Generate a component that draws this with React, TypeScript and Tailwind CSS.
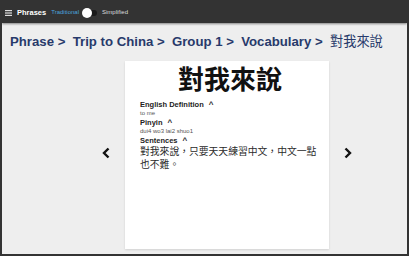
import React from "react";

function Label({ children }: { children: React.ReactNode }) {
  return (
    <div className="flex items-center gap-[5px] text-[7.5px] font-bold leading-[9px] text-[#222]">
      {children}
      <span className="text-[8px] font-bold">^</span>
    </div>
  );
}

export default function App() {
  return (
    <div
      className="box-border flex h-[256px] w-[409px] flex-col overflow-hidden border-2 border-[#333] bg-[#eeeeee]"
      style={{ fontFamily: '"Liberation Sans", Arial, "Noto Sans CJK TC", sans-serif' }}
    >
      <header className="flex h-[21px] shrink-0 items-center bg-[#333333] pl-[3px] shadow-[0_1px_2px_rgba(0,0,0,0.45)]">
        <svg width="7" height="6" viewBox="0 0 7 6" className="mr-[5px]">
          <rect x="0" y="0" width="7" height="1.2" fill="#ddd" />
          <rect x="0" y="2.4" width="7" height="1.2" fill="#ddd" />
          <rect x="0" y="4.8" width="7" height="1.2" fill="#ddd" />
        </svg>
        <span className="text-[7.5px] font-bold text-white">Phrases</span>
        <span className="ml-[5px] text-[6px] text-[#4aa3df]">Traditional</span>
        <div className="relative ml-[4px] h-[6px] w-[14px] rounded-full bg-[#1a1a1a]">
          <div className="absolute left-[-1px] top-[-2px] h-[10px] w-[10px] rounded-full bg-white" />
        </div>
        <span className="ml-[5px] text-[6px] text-[#ddd]">Simplified</span>
      </header>

      <div className="whitespace-pre pl-[8px] pt-[10px] text-[13.2px] font-bold leading-[18px] text-[#283a6b]">
        {"Phrase >  Trip to China >  Group 1 >  Vocabulary >  "}
        <span className="font-normal">對我來說</span>
      </div>

      <div className="flex flex-1 items-start pl-[93px] pt-[10px]">
        <div className="flex h-[156px] w-[22px] items-end justify-center pb-[58px]">
          <svg width="8" height="12" viewBox="0 0 8 12">
            <path d="M6.5 1.5 L2 6 L6.5 10.5" fill="none" stroke="#111" strokeWidth="2.4" />
          </svg>
        </div>
        <div className="mx-[8px] h-[188px] w-[204px] bg-white pl-[15px] pr-[9px] pt-[4px] shadow-[0_1px_2px_rgba(0,0,0,0.12)]">
          <div className="text-center text-[26px] font-bold leading-[30px] text-[#111]">對我來說</div>
          <div className="mt-[5px]">
            <Label>English Definition</Label>
            <div className="text-[6px] leading-[8px] text-[#555]">to me</div>
          </div>
          <div className="mt-[1px]">
            <Label>Pinyin</Label>
            <div className="text-[6px] leading-[8px] text-[#555]">dui4 wo3 lai2 shuo1</div>
          </div>
          <div className="mt-[1px]">
            <Label>Sentences</Label>
            <div className="text-[9.8px] leading-[13px] text-[#2a2a2a]">對我來說，只要天天練習中文，中文一點也不難。</div>
          </div>
        </div>
        <div className="flex h-[156px] w-[22px] items-end justify-center pb-[58px]">
          <svg width="8" height="12" viewBox="0 0 8 12">
            <path d="M1.5 1.5 L6 6 L1.5 10.5" fill="none" stroke="#111" strokeWidth="2.4" />
          </svg>
        </div>
      </div>
    </div>
  );
}
